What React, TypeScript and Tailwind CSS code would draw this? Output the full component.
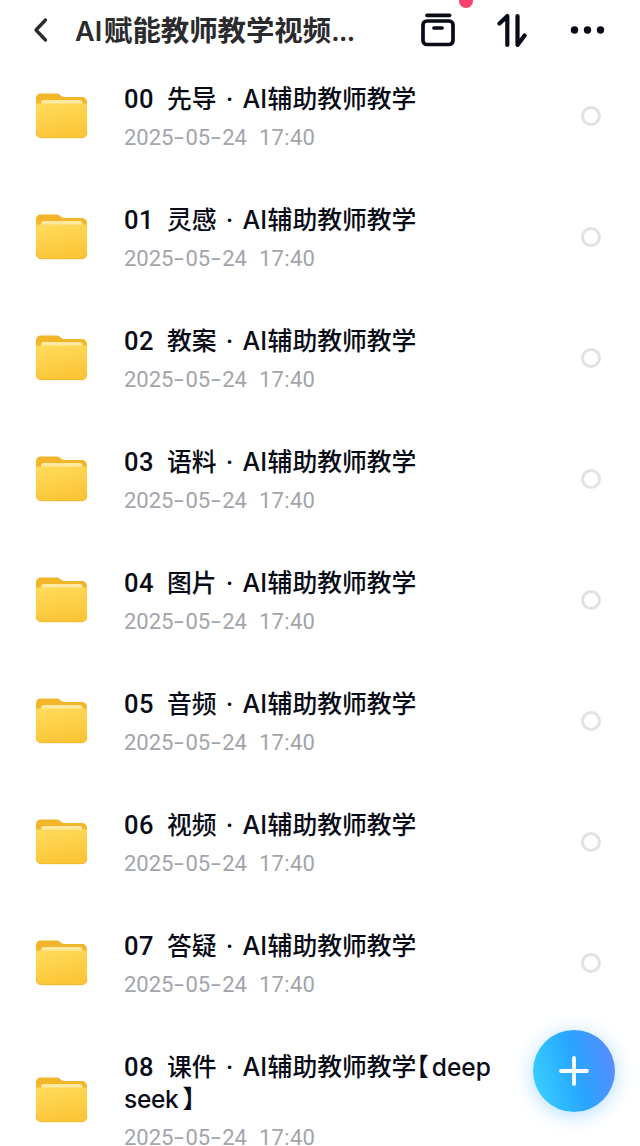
import { useState } from 'react';

const folders = [
  { no: '00', topic: '先导' },
  { no: '01', topic: '灵感' },
  { no: '02', topic: '教案' },
  { no: '03', topic: '语料' },
  { no: '04', topic: '图片' },
  { no: '05', topic: '音频' },
  { no: '06', topic: '视频' },
  { no: '07', topic: '答疑' },
  { no: '08', topic: '课件', tag: ['deep', 'seek'] },
];

const FolderIcon = () => (
  <svg width="53" height="46" viewBox="0 0 52 46" preserveAspectRatio="none" className="block">
    <defs>
      <linearGradient id="folderFront" x1="0" y1="0" x2="0.3" y2="1">
        <stop offset="0" stopColor="#ffdc5c" />
        <stop offset="1" stopColor="#fcc638" />
      </linearGradient>
    </defs>
    <path d="M1 5a4.500 4.500 0 0 1 4.500-4.500h15.500q2 0 3.500 1.300l1.800 1.400q1 .8 2.500 .8h17.200a5 5 0 0 1 5 5v10H1z" fill="#f3b52a" />
    <path d="M6 11.500V9.500q0-2.500 2.500-2.500h35.500q2.500 0 2.500 2.500v2z" fill="#ffe9a0" />
    <path d="M1 10.500h50v29.500a5 5 0 0 1-5 5H6a5 5 0 0 1-5-5z" fill="url(#folderFront)" />
    <path d="M1.300 38.500v1.500a4.700 4.700 0 0 0 4.700 4.700h40a4.700 4.700 0 0 0 4.700-4.700v-1.500" fill="none" stroke="#efb42c" strokeWidth=".8" />
  </svg>
);

const Dash = () => <span className="inline-block w-[12px] scale-x-[1.6] text-center leading-none">-</span>;

const Header = () => (
  <header className="relative flex h-[60px] shrink-0 items-center">
    <button className="ml-[33px] w-4">
      <svg width="16" height="26" viewBox="0 0 16 26" fill="none" stroke="#2b2b2d" strokeWidth="3.300" strokeLinecap="round" strokeLinejoin="round">
        <path d="M12.500 3L3 13l9.500 10" />
      </svg>
    </button>
    <h1 className="-mt-[2px] ml-[26px] w-[346px] whitespace-nowrap text-[28.400px] font-bold leading-[40px] text-[#2b2b2d]">
      <span className="inline-block w-[29px] font-['Inter'] text-[27px] font-semibold leading-none">AI</span>
      赋能教师教学视频
      <span className="font-['Inter'] text-[25px] leading-none tracking-[-0.5px]">...</span>
    </h1>
    <svg width="34" height="34" viewBox="0 0 34 34" className="block" fill="none" stroke="#090b16" strokeWidth="3.700" strokeLinecap="round">
      <path d="M6 2.300h22.500" />
      <rect x="2" y="8" width="30" height="23.500" rx="4" />
      <path d="M13 15h8" />
    </svg>
    <svg width="30" height="36" viewBox="0 0 30 36" className="ml-[42px] block" fill="none" stroke="#090b16" strokeWidth="4.200" strokeLinecap="round" strokeLinejoin="round">
      <path d="M2.500 11.500l7.800-7.500v29" />
      <path d="M20.500 4v29l7-9.500" />
    </svg>
    <svg width="36" height="10" viewBox="0 0 36 10" className="ml-[43px] block" fill="#090b16">
      <circle cx="4.500" cy="5" r="3.700" />
      <circle cx="17.500" cy="5" r="3.700" />
      <circle cx="30.500" cy="5" r="3.700" />
    </svg>
    <span className="absolute -top-[6px] left-[459px] h-[14px] w-[14px] rounded-full bg-[#fb4169]" />
  </header>
);

const App = () => {
  const [selected, setSelected] = useState<string[]>([]);

  const toggle = (no: string) =>
    setSelected((prev) => (prev.includes(no) ? prev.filter((n) => n !== no) : [...prev, no]));

  return (
    <div className="relative flex h-[1146px] w-[640px] flex-col overflow-hidden bg-white font-['Noto_Sans_CJK_SC',sans-serif]">
      <Header />

      <ul className="pt-[21px]">
        {folders.map(({ no, topic, tag }) => (
          <li key={no} className={`flex pl-[35px] ${tag ? 'h-[153px]' : 'h-[121px]'}`}>
            <div className={tag ? 'pt-[28px]' : 'pt-[12px]'}>
              <FolderIcon />
            </div>
            <div className="ml-[36px] w-[440px] whitespace-nowrap">
              <div className="text-[24.800px] font-medium leading-8 text-[#090b16]">
                <span className="inline-block w-[43px] font-['Roboto'] text-[25.500px] leading-none tracking-[0.4px]">{no}</span>
                {topic}
                <span className="inline-block w-[26px] text-center font-['Inter'] leading-none">·</span>
                <span className="inline-block w-[25px] font-['Inter'] text-[25px] leading-none">AI</span>
                辅助教师教学
                {tag && (
                  <>
                    <span className="[font-feature-settings:'halt']">【</span>
                    <span className="ml-[3px] font-['Inter'] text-[24.500px] leading-none">{tag[0]}</span>
                    <br />
                    <span className="mr-[4px] font-['Inter'] text-[24.500px] leading-none tracking-[-0.3px]">{tag[1]}</span>
                    <span className="[font-feature-settings:'halt']">】</span>
                  </>
                )}
              </div>
              <div className="mt-[9px] font-['Roboto'] text-[22px] leading-8 text-[#a2a5ab]">
                <span>2025</span>
                <Dash />
                <span>05</span>
                <Dash />
                <span>24</span>
                <span className="ml-[12px] tracking-[0.3px]">17:40</span>
              </div>
            </div>
            <button
              onClick={() => toggle(no)}
              className={`ml-[17px] mt-[25px] h-5 w-5 rounded-full border-[3px] ${
                selected.includes(no) ? 'border-[#2b9cff] bg-[#2b9cff]' : 'border-[#e2e2e4]'
              } ${tag ? 'invisible' : ''}`}
            />
          </li>
        ))}
      </ul>

      {/* Upload button */}
      <button className="absolute left-[533px] top-[1030px] flex h-[82px] w-[82px] items-center justify-center rounded-full bg-[linear-gradient(75deg,#38ceff_8%,#27a6ff_52%,#588cff_92%)] shadow-[0_3px_20px_rgba(64,170,255,0.4)]">
        <svg width="32" height="32" viewBox="0 0 32 32" stroke="white" strokeWidth="3.800" strokeLinecap="round">
          <path d="M16 3v26M3 16h26" />
        </svg>
      </button>
    </div>
  );
};

export default App;
